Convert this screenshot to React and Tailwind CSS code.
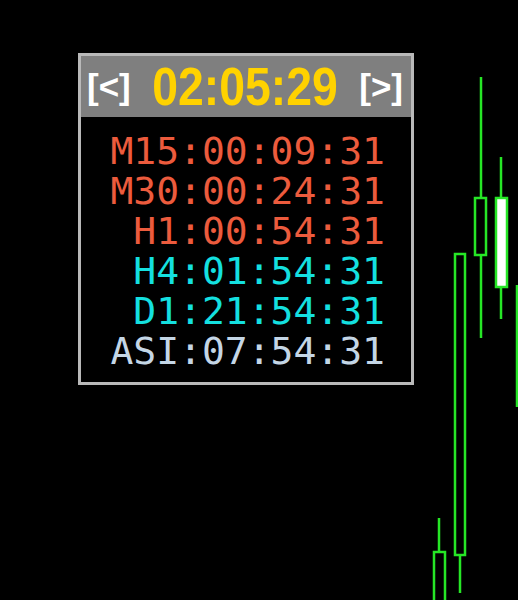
import React from 'react';

const rows = [
    { label: 'M15', time: '00:09:31', color: 'text-[#ec5b3d]' },
    { label: 'M30', time: '00:24:31', color: 'text-[#ec5b3d]' },
    { label: 'H1', time: '00:54:31', color: 'text-[#ec5b3d]' },
    { label: 'H4', time: '01:54:31', color: 'text-[#14e0e0]' },
    { label: 'D1', time: '21:54:31', color: 'text-[#14e0e0]' },
    { label: 'ASI', time: '07:54:31', color: 'text-[#c4d6e6]' },
];

const Chart = () => {
    const g = '#26e626';
    return (
        <svg className="absolute inset-0" width="518" height="600" viewBox="0 0 518 600">
            {/* candle far left bottom */}
            <line x1="439" y1="518" x2="439" y2="552" stroke={g} strokeWidth="2.5" />
            <rect x="434" y="552" width="11" height="60" fill="none" stroke={g} strokeWidth="2.5" />
            {/* tall hollow candle */}
            <line x1="460" y1="555" x2="460" y2="593" stroke={g} strokeWidth="2.5" />
            <rect x="455" y="254" width="10" height="301" fill="none" stroke={g} strokeWidth="2.5" />
            {/* hollow candle */}
            <line x1="481" y1="77" x2="481" y2="198" stroke={g} strokeWidth="2.5" />
            <line x1="481" y1="256" x2="481" y2="338" stroke={g} strokeWidth="2.5" />
            <rect x="475" y="198" width="11" height="57" fill="none" stroke={g} strokeWidth="2.5" />
            {/* filled candle */}
            <line x1="501" y1="157" x2="501" y2="319" stroke={g} strokeWidth="2.5" />
            <rect x="496" y="198" width="11" height="89" fill="#ffffff" stroke={g} strokeWidth="2.5" />
            {/* edge candle */}
            <line x1="517" y1="285" x2="517" y2="407" stroke={g} strokeWidth="2.5" />
        </svg>
    );
};

export default function App() {
    return (
        <div className="relative w-[518px] h-[600px] bg-black overflow-hidden">
            <Chart />
            <div className="absolute left-[78px] top-[53px] w-[336px] h-[332px] border-[3px] border-[#b9b9b9] bg-black flex flex-col">
                <div className="h-[61px] bg-[#7f7f7f] flex items-center justify-between pl-[6px] pr-[8px] font-['Liberation_Sans',Arial,sans-serif] font-bold">
                    <span className="text-white text-[35px] leading-none">[&lt;]</span>
                    <span className="text-[#ffd200] text-[53px] leading-none scale-x-[0.875]">02:05:29</span>
                    <span className="text-white text-[35px] leading-none">[&gt;]</span>
                </div>
                <div className="flex flex-col items-end pr-[26px] pt-[14px] font-['DejaVu_Sans_Mono',monospace] text-[38px] leading-[40px]">
                    {rows.map((r) => (
                        <div key={r.label} className={r.color}>
                            {r.label}:{r.time}
                        </div>
                    ))}
                </div>
            </div>
        </div>
    );
}
